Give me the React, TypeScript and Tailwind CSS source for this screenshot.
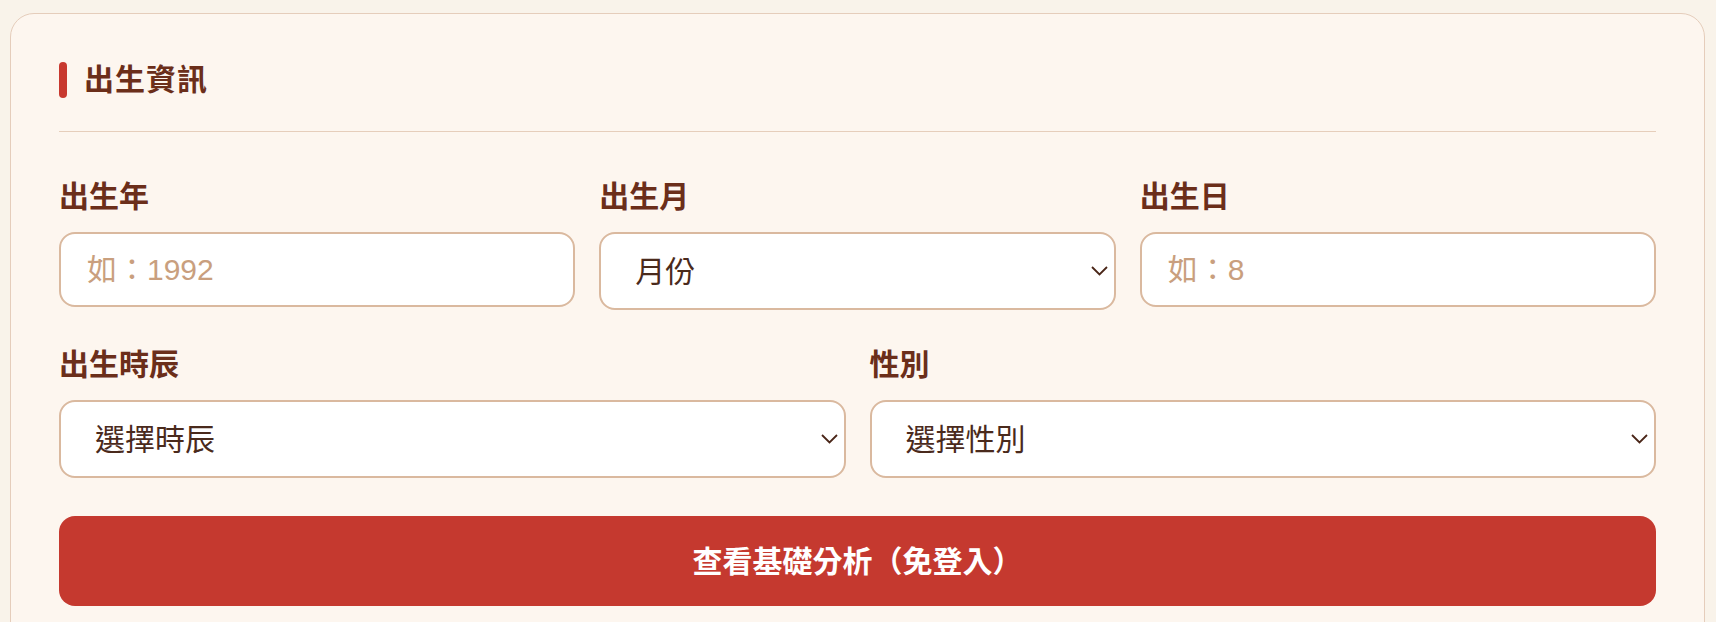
import React from 'react';

const font = { fontFamily: '"Liberation Sans", "Noto Sans CJK TC", sans-serif' };

function Chevron() {
  return (
    <svg
      className="pointer-events-none absolute right-[8px] top-1/2 -translate-y-1/2"
      width="17"
      height="10"
      viewBox="0 0 17 10"
      fill="none"
    >
      <path d="M1 1l7.5 7.5L16 1" stroke="#4a2618" strokeWidth="1.8" />
    </svg>
  );
}

type Field = { label: string; kind: 'input' | 'select'; text: string };

function FieldBox({ f }: { f: Field }) {
  return (
    <div className="flex flex-col">
      <label className="mb-[17px] text-[30px] font-bold leading-[36px] text-[#6b2e1a]">{f.label}</label>
      {f.kind === 'input' ? (
        <input
          placeholder={f.text}
          className="h-[75px] w-full rounded-[16px] border-2 border-[#dab99f] bg-white px-[26px] text-[30px] text-[#4a2a1c] outline-none placeholder:text-[#c99f7e]"
          style={font}
        />
      ) : (
        <div className="relative">
          <select
            defaultValue=""
            className="h-[78px] w-full appearance-none rounded-[16px] border-2 border-[#dab99f] bg-white pl-[34px] pr-10 text-[30px] text-[#4a2a1c] outline-none"
            style={font}
          >
            <option value="">{f.text}</option>
          </select>
          <Chevron />
        </div>
      )}
    </div>
  );
}

export default function App() {
  const row1: Field[] = [
    { label: '出生年', kind: 'input', text: '如：1992' },
    { label: '出生月', kind: 'select', text: '月份' },
    { label: '出生日', kind: 'input', text: '如：8' },
  ];
  const row2: Field[] = [
    { label: '出生時辰', kind: 'select', text: '選擇時辰' },
    { label: '性別', kind: 'select', text: '選擇性別' },
  ];

  return (
    <div lang="zh-Hant" className="min-h-screen bg-[#f9f3ea] pl-[10px] pr-[11px] pt-[13px]" style={font}>
      <div className="rounded-[24px] border border-[#e5cdbb] bg-[#fdf6ef] p-12">
        <div className="flex items-center gap-[17px] border-b border-[#e6cebb] pb-[33px]">
          <span className="h-[36px] w-2 rounded-full bg-[#c8392f]" />
          <h2 className="text-[30px] font-bold leading-[36px] tracking-[1px] text-[#6b2e1a]">出生資訊</h2>
        </div>

        <div className="mt-[47px] grid grid-cols-3 gap-6">
          {row1.map((f) => (
            <FieldBox key={f.label} f={f} />
          ))}
        </div>

        <div className="mt-[37px] grid grid-cols-2 gap-6">
          {row2.map((f) => (
            <FieldBox key={f.label} f={f} />
          ))}
        </div>

        <button className="mt-[38px] h-[90px] w-full rounded-[16px] bg-[#c5392f] text-[30px] font-bold text-white">
          查看基礎分析（免登入）
        </button>
      </div>
    </div>
  );
}
